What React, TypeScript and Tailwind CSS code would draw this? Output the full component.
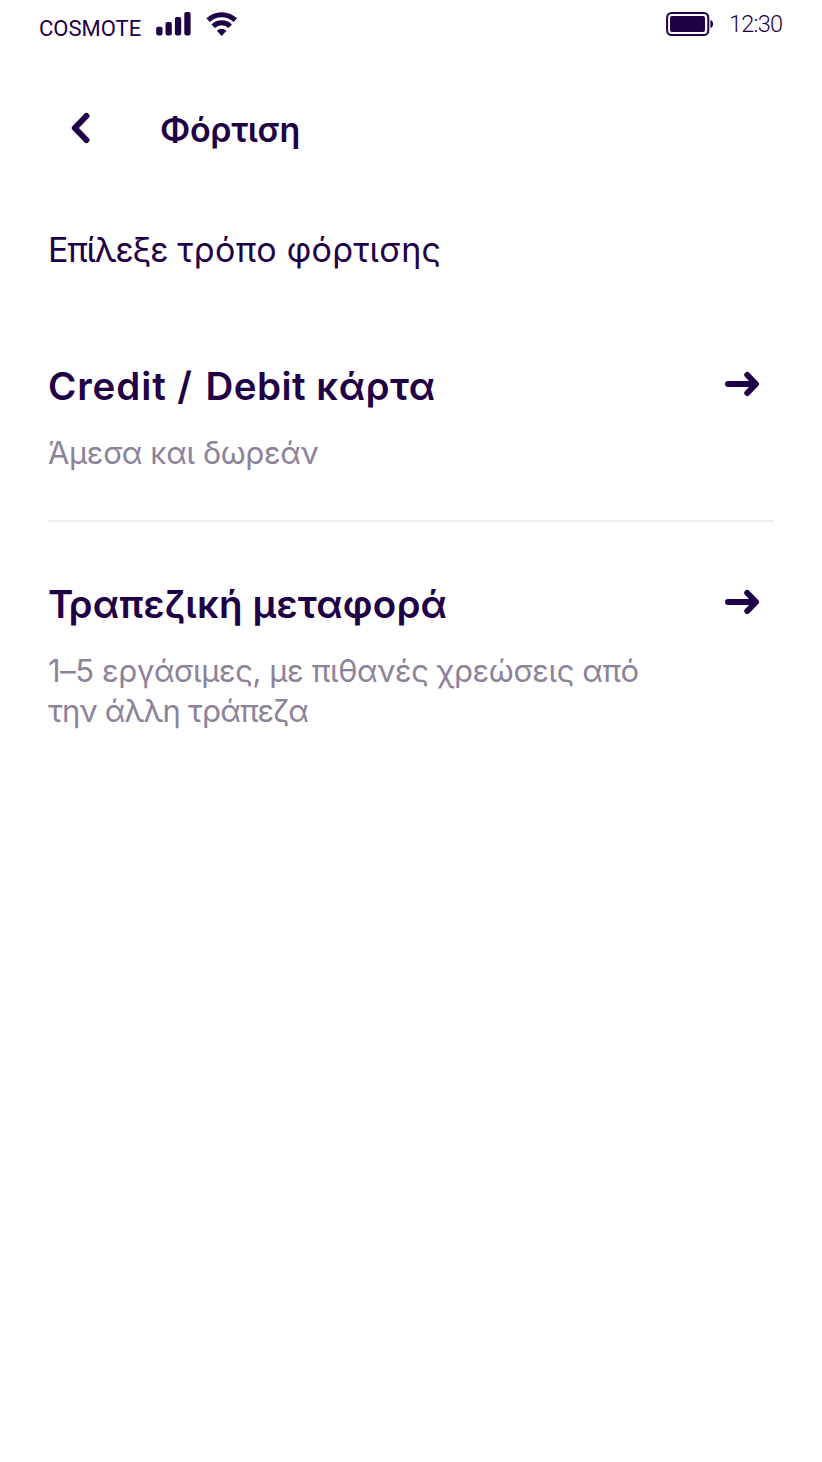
import React from "react";

function SignalIcon() {
  return (
    <svg className="mt-3 ml-[15px] h-6 w-[35px] shrink-0" viewBox="0 0 35 24" fill="currentColor">
      <rect x="0.2" y="14.8" width="6.3" height="8.6" rx="1.8" />
      <rect x="9.5" y="10" width="6.3" height="13.4" rx="1.8" />
      <rect x="18.9" y="5" width="6.3" height="18.4" rx="1.8" />
      <rect x="28.3" y="0" width="6.3" height="23.4" rx="1.8" />
    </svg>
  );
}

function WifiIcon() {
  return (
    <svg className="mt-3 ml-[15px] h-6 w-8 shrink-0" viewBox="0 0 32 24" fill="none" stroke="currentColor" strokeWidth="5">
      <path d="M2.1 8.2 A20 20 0 0 1 29.3 8.2" />
      <path d="M7.2 14.3 A12.2 12.2 0 0 1 24.2 14.3" />
      <path d="M15.7 23.9 L10.9 18.8 C13.7 16 17.7 16 20.5 18.8 Z" fill="currentColor" stroke="none" />
    </svg>
  );
}

function BatteryIcon() {
  return (
    <svg className="mt-3 h-6 w-12 shrink-0" viewBox="0 0 48 24">
      <rect x="1.1" y="1" width="41.2" height="22" rx="4.5" fill="none" stroke="currentColor" strokeWidth="2" />
      <rect x="4" y="4" width="35" height="16" rx="2" fill="currentColor" />
      <path d="M44.4 8 C48 9 48 15 44.4 16 Z" fill="currentColor" />
    </svg>
  );
}

function ArrowIcon() {
  return (
    <svg className="mt-[9px] h-[26px] w-9 shrink-0" viewBox="0 0 36 26" fill="none" stroke="currentColor" strokeWidth="6" strokeLinecap="round" strokeLinejoin="round">
      <path d="M4 13 H31 M23.3 4 L32 13 L23.3 22" />
    </svg>
  );
}

function Option({ title, children }: { title: React.ReactNode; children: React.ReactNode }) {
  return (
    <button className="flex w-full items-start justify-between pr-[14px] text-left">
      <div>
        <h2 className="text-[38.5px] leading-[48px] font-semibold whitespace-nowrap">{title}</h2>
        <div className="mt-[23px] text-[31px] leading-10 whitespace-nowrap text-[#8d8399]">{children}</div>
      </div>
      <ArrowIcon />
    </button>
  );
}

export default function App() {
  return (
    <div className="flex min-h-[1462px] w-full flex-col bg-white font-['Inter','Noto_Sans',sans-serif] text-[#1f0046]">
      <div className="flex h-12 items-start justify-between pr-[38px] pl-[39px] font-['Roboto',sans-serif]">
        <div className="flex">
          <span className="w-[102px] pt-[9px] text-[22px] leading-10 whitespace-nowrap">COSMOTE</span>
          <SignalIcon />
          <WifiIcon />
        </div>
        <div className="flex">
          <BatteryIcon />
          <span className="ml-[15px] w-[55px] text-[23.5px] leading-[48px] font-light tracking-[-0.75px] whitespace-nowrap">12:30</span>
        </div>
      </div>

      <header className="mt-[58px] flex h-12 items-center pl-[70px]">
        <svg className="-mt-1 h-8 w-[22px] shrink-0" viewBox="0 0 22 32" fill="none" stroke="currentColor" strokeWidth="6" strokeLinecap="round" strokeLinejoin="round">
          <path d="M16.4 4 L4.8 16 L16.4 28" />
        </svg>
        <h1 className="ml-[68px] text-[34px] leading-[48px] font-semibold tracking-[-0.3px] whitespace-nowrap">Φόρτιση</h1>
      </header>

      <main className="mt-[72px] pr-12 pl-12">
        <p className="text-[34px] leading-[48px] tracking-[0.3px] whitespace-nowrap">
          <span className="tracking-[-1.2px]">Επίλεξε</span> τρόπο φόρτισης
        </p>
        <div className="mt-[88px] border-b-2 border-[#eeeeee] pb-[47px]">
          <Option
            title={
              <>
                <span className="tracking-[0.9px]">Credit</span>
                <span className="mr-0.5 tracking-[0.9px]"> / </span>
                <span className="tracking-[0.5px]">Debit κάρτα</span>
              </>
            }
          >
            <p className="tracking-[-0.35px]">Άμεσα και δωρεάν</p>
          </Option>
        </div>
        <div className="mt-[58px]">
          <Option title={<span className="tracking-[0.2px]">Τραπεζική μεταφορά</span>}>
            <p className="tracking-[-0.4px]">1–5 εργάσιμες, με πιθανές χρεώσεις από</p>
            <p className="tracking-[-0.85px]">την άλλη τράπεζα</p>
          </Option>
        </div>
      </main>
    </div>
  );
}
